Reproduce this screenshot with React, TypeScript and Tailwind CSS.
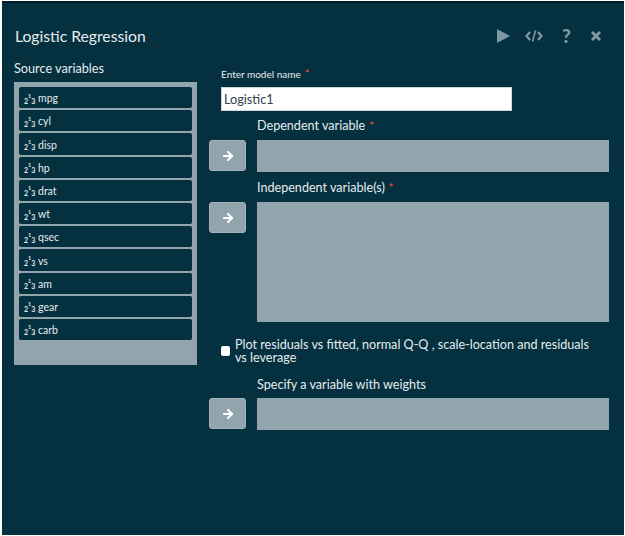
import { ArrowRight } from "lucide-react";

const variables = ["mpg", "cyl", "disp", "hp", "drat", "wt", "qsec", "vs", "am", "gear", "carb"];

function NumericIcon() {
  return (
    <span className="flex items-end w-[10px] h-[13px] shrink-0 text-[7px] leading-[9px] font-bold text-[#e4eaec]">
      <span>2</span>
      <span className="text-[5.5px] leading-[7px] -translate-y-[6px]">1</span>
      <span>3</span>
    </span>
  );
}

function ArrowButton() {
  return (
    <button className="w-[37px] h-[31px] shrink-0 rounded-[3px] border border-[#a3b3ba] bg-[#92a5ad] flex items-center justify-center">
      <ArrowRight size={14} strokeWidth={3.5} className="text-white" />
    </button>
  );
}

function Required() {
  return <span className="text-[#f0562a] text-[11px] align-top ml-1">*</span>;
}

export default function App() {
  return (
    <div className="w-[625px] h-[536px] bg-white pl-[2px] pt-[1px] pr-[1px] pb-[1px] overflow-hidden" style={{ fontFamily: "Lato, 'Noto Sans', sans-serif" }}>
      <div className="h-full bg-[#05303f] border-t-2 border-[#021c26] text-[#e6ecee] flex flex-col">
        <div className="flex items-center justify-between h-[50px] pt-[15px] pl-[13px] pr-[23px] shrink-0">
          <h1 className="text-[15.7px] leading-[24px]">Logistic Regression</h1>
          <div className="flex items-center text-[#7f98a3]">
            <svg width="13" height="14" viewBox="0 0 13 14"><path d="M0 0 L13 7 L0 14 Z" fill="currentColor" /></svg>
            <svg width="18" height="14" viewBox="0 0 18 14" fill="none" stroke="currentColor" strokeWidth="2.2" className="ml-[15px]"><path d="M5 3 L1.5 7 L5 11" /><path d="M13 3 L16.5 7 L13 11" /><path d="M10.5 1.5 L7.5 12.5" strokeWidth="1.6" /></svg>
            <span className="ml-[18px] w-[11px] text-center text-[19px] leading-none font-black">?</span>
            <svg width="10" height="10" viewBox="0 0 10 10" stroke="currentColor" strokeWidth="3" className="ml-[19px]"><path d="M1 1 L9 9 M9 1 L1 9" /></svg>
          </div>
        </div>

        <div className="flex pl-[12px] pt-[6px]">
          <div className="w-[183px] shrink-0">
            <div className="text-[12.7px] leading-[18px] mb-[5px]">Source variables</div>
            <div className="h-[283px] bg-[#92a5ad] pt-[5px] px-[5px] flex flex-col gap-[2px]">
              {variables.map((v) => (
                <div key={v} className="h-[21.2px] shrink-0 rounded-[2px] bg-[#05303f] flex items-center gap-[4px] pl-[5px] pt-[3px] text-[10.5px]">
                  <NumericIcon />
                  <span>{v}</span>
                </div>
              ))}
            </div>
          </div>

          <div className="ml-[12px] flex-1 pr-[15px]">
            <div className="pl-[12px] text-[10px] leading-[14px] mt-[8px]">Enter model name<Required /></div>
            <input
              readOnly
              value="Logistic1"
              className="block ml-[12px] mt-[6px] w-[291px] h-[24px] bg-white border border-[#cfd6d9] px-[2px] text-[12.7px] text-[#33414a] outline-none"
            />
            <div className="pl-[48px] mt-[5px] text-[12.6px] leading-[20px]">Dependent variable<Required /></div>
            <div className="flex gap-[11px] mt-[4px]">
              <ArrowButton />
              <div className="flex-1 h-[32px] bg-[#92a5ad]" />
            </div>
            <div className="pl-[48px] mt-[6px] text-[12.6px] leading-[20px]">Independent variable(s)<Required /></div>
            <div className="flex gap-[11px] mt-[4px]">
              <ArrowButton />
              <div className="flex-1 h-[120px] bg-[#92a5ad]" />
            </div>
            <label className="flex items-center gap-[5px] ml-[12px] mt-[16px] text-[12.6px] leading-[13px]">
              <span className="w-[9px] h-[10px] shrink-0 rounded-[2px] bg-white" />
              <span className="w-[360px]">Plot residuals vs fitted, normal Q-Q , scale-location and residuals vs leverage</span>
            </label>
            <div className="pl-[48px] mt-[11px] text-[12.6px] leading-[20px]">Specify a variable with weights</div>
            <div className="flex gap-[11px] mt-[3px]">
              <ArrowButton />
              <div className="flex-1 h-[32px] bg-[#92a5ad]" />
            </div>
          </div>
        </div>
      </div>
    </div>
  );
}
